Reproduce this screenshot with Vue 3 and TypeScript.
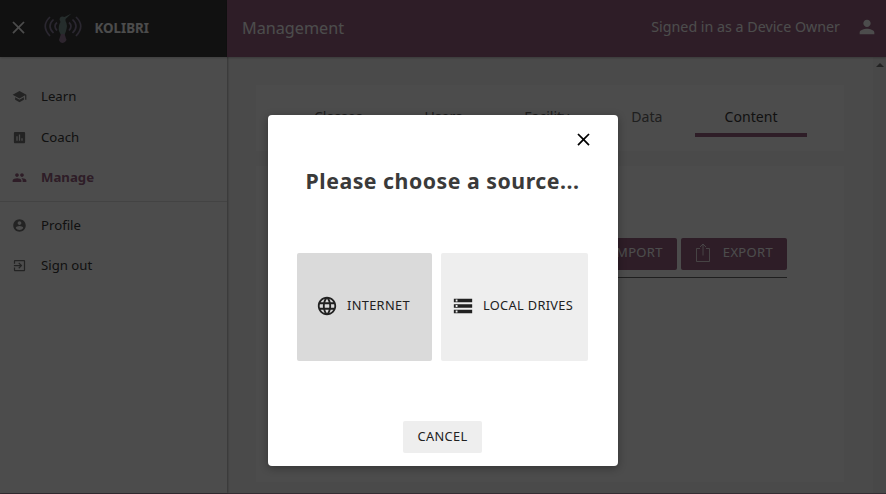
<script setup lang="ts">
interface NavItem {
  label: string
  path: string
  active?: boolean
}

const mainNav: NavItem[] = [
  { label: 'Learn', path: 'M5 13.18v4L12 21l7-3.82v-4L12 17l-7-3.82zM12 3L1 9l11 6 9-4.91V17h2V9L12 3z' },
  { label: 'Coach', path: 'M19 3H5c-1.1 0-2 .9-2 2v14c0 1.1.9 2 2 2h14c1.1 0 2-.9 2-2V5c0-1.1-.9-2-2-2zM9 17H7v-7h2v7zm4 0h-2V7h2v10zm4 0h-2v-4h2v4z' },
  { label: 'Manage', active: true, path: 'M16 11c1.66 0 2.99-1.34 2.99-3S17.66 5 16 5s-3 1.34-3 3 1.34 3 3 3zm-8 0c1.66 0 2.99-1.34 2.99-3S9.66 5 8 5 5 6.34 5 8s1.34 3 3 3zm0 2c-2.33 0-7 1.17-7 3.5V19h14v-2.5c0-2.33-4.67-3.5-7-3.5zm8 0c-.29 0-.62.02-.97.05 1.16.84 1.97 1.97 1.97 3.45V19h6v-2.5c0-2.33-4.67-3.5-7-3.5z' },
]
const userNav: NavItem[] = [
  { label: 'Profile', path: 'M12 2C6.48 2 2 6.48 2 12s4.48 10 10 10 10-4.48 10-10S17.52 2 12 2zm0 3c1.66 0 3 1.34 3 3s-1.34 3-3 3-3-1.34-3-3 1.34-3 3-3zm0 14.2c-2.5 0-4.71-1.28-6-3.22.03-1.99 4-3.08 6-3.08 1.99 0 5.97 1.09 6 3.08-1.29 1.94-3.5 3.22-6 3.22z' },
  { label: 'Sign out', path: 'M10.09 15.59L11.5 17l5-5-5-5-1.41 1.41L12.67 11H3v2h9.67l-2.58 2.59zM19 3H5c-1.11 0-2 .9-2 2v4h2V5h14v14H5v-4H3v4c0 1.1.89 2 2 2h14c1.1 0 2-.9 2-2V5c0-1.1-.9-2-2-2z' },
]
const tabs: string[] = ['Classes', 'Users', 'Facility', 'Data', 'Content']
const closePath = 'M19 6.41L17.59 5 12 10.59 6.41 5 5 6.41 10.59 12 5 17.59 6.41 19 12 13.41 17.59 19 19 17.59 13.41 12z'
</script>

<template>
  <div class="app">
    <aside class="sidebar">
      <div class="brand">
        <svg class="brand-close" viewBox="0 0 24 24"><path :d="closePath" /></svg>
        <svg class="logo" viewBox="0 0 38 32">
          <g class="waves">
            <path d="M6 4Q-3.500 13 6 23M9.500 6.500Q2.500 13 9.500 20M13 9.500Q9 13 13 17.500" />
            <path d="M32 4Q41.500 13 32 23M28.500 6.500Q35.500 13 28.500 20M25 9.500Q29 13 25 17.500" />
          </g>
          <path class="bird" d="M27.500 0.500L20.500 4Q16 2.500 15.500 6.500L16.500 9Q14 13 15 18L17 22H20.500L22 18Q24 12 21.500 8V6Z" />
          <path class="tail" d="M17 21H20.500L22.500 27Q21 30 18.800 30Q16 30 15 27Z" />
        </svg>
        <span class="brand-name">KOLIBRI</span>
      </div>
      <nav class="nav">
        <a v-for="item in mainNav" :key="item.label" class="nav-item" :class="{ active: item.active }">
          <svg viewBox="0 0 24 24"><path :d="item.path" /></svg>{{ item.label }}
        </a>
        <div class="divider"></div>
        <a v-for="item in userNav" :key="item.label" class="nav-item">
          <svg viewBox="0 0 24 24"><path :d="item.path" /></svg>{{ item.label }}
        </a>
      </nav>
    </aside>

    <div class="main">
      <header class="topbar">
        <span class="page-title">Management</span>
        <span class="signed-in">Signed in as a Device Owner</span>
        <svg class="person" viewBox="0 0 24 24"><path d="M12 12c2.210 0 4-1.790 4-4s-1.790-4-4-4-4 1.790-4 4 1.790 4 4 4zm0 2c-2.670 0-8 1.340-8 4v2h16v-2c0-2.660-5.330-4-8-4z" /></svg>
      </header>
      <div class="body">
        <div class="content">
          <div class="card tabs">
            <a v-for="tab in tabs" :key="tab" class="tab" :class="{ selected: tab === 'Content' }">{{ tab }}</a>
          </div>
          <div class="card channels">
            <div class="actions">
              <button class="primary">
                <svg viewBox="0 0 16 20"><path d="M5 6.500H1.500V19H14.500V6.500H11M8 1V13M5 10L8 13L11 10" /></svg>IMPORT
              </button>
              <button class="primary">
                <svg viewBox="0 0 16 20"><path d="M5 5.500H1.500V18.500H14.500V5.500H11M8 12.500V1M5 4L8 1L11 4" /></svg>EXPORT
              </button>
            </div>
          </div>
        </div>
        <div class="scrollbar"><span class="arrow"></span></div>
      </div>
    </div>

    <div class="overlay">
      <section class="modal">
        <svg class="modal-close" viewBox="0 0 24 24"><path :d="closePath" /></svg>
        <h1>Please choose a source...</h1>
        <div class="sources">
          <button class="source internet">
            <svg viewBox="0 0 24 24"><path d="M11.990 2C6.470 2 2 6.480 2 12s4.470 10 9.990 10C17.520 22 22 17.520 22 12S17.520 2 11.990 2zm6.930 6h-2.950c-.32-1.250-.78-2.450-1.380-3.560 1.840.63 3.370 1.910 4.330 3.560zM12 4.040c.83 1.200 1.480 2.530 1.910 3.960h-3.820c.43-1.430 1.080-2.760 1.910-3.960zM4.260 14C4.100 13.360 4 12.690 4 12s.1-1.360.26-2h3.380c-.08.66-.14 1.320-.14 2 0 .68.06 1.340.14 2H4.260zm.82 2h2.950c.32 1.250.78 2.450 1.380 3.560-1.840-.63-3.370-1.900-4.330-3.560zm2.950-8H5.080c.96-1.660 2.490-2.930 4.330-3.560C8.810 5.550 8.350 6.750 8.030 8zM12 19.960c-.83-1.200-1.480-2.530-1.910-3.960h3.820c-.43 1.430-1.080 2.760-1.910 3.960zM14.340 14H9.660c-.09-.66-.16-1.320-.16-2 0-.68.07-1.350.16-2h4.680c.09.65.16 1.320.16 2 0 .68-.07 1.340-.16 2zm.25 5.560c.6-1.110 1.060-2.310 1.380-3.560h2.950c-.96 1.650-2.490 2.930-4.330 3.560zM16.360 14c.08-.66.14-1.320.14-2 0-.68-.06-1.340-.14-2h3.380c.16.64.26 1.310.26 2s-.1 1.360-.26 2h-3.380z" /></svg>INTERNET
          </button>
          <button class="source drives">
            <svg viewBox="0 0 24 24"><path d="M2 20h20v-4H2v4zm2-3h2v2H4v-2zM2 4v4h20V4H2zm4 3H4V5h2v2zm-4 7h20v-4H2v4zm2-3h2v2H4v-2z" /></svg>LOCAL DRIVES
          </button>
        </div>
        <button class="cancel">CANCEL</button>
      </section>
    </div>
  </div>
</template>

<style>
body {
  margin: 0;
  overflow: hidden;
}
</style>

<style scoped>
.app {
  position: relative;
  display: flex;
  width: 886px;
  height: 494px;
  box-sizing: border-box;
  padding-bottom: 1px;
  overflow: hidden;
  background: #b39aab;
  color: #3a3a3a;
  font-family: "Noto Sans", sans-serif;
  font-size: 13.200px;
}
svg {
  flex: none;
  fill: currentColor;
}
button {
  display: flex;
  align-items: center;
  box-sizing: border-box;
  border: 0;
  border-radius: 2px;
  padding: 0;
  color: #212121;
  font: inherit;
  font-size: 12.8px;
  letter-spacing: 0.33px;
  white-space: nowrap;
}
.sidebar {
  z-index: 1;
  width: 227px;
  background: #fff;
  box-shadow: 1px 0 2px rgba(0, 0, 0, 0.3);
}
.brand {
  display: flex;
  align-items: center;
  box-sizing: border-box;
  height: 57px;
  padding: 0 0 3px 8px;
  background: #3a3a3a;
  box-shadow: 0 1px 2px rgba(0, 0, 0, 0.2);
  color: #fff;
}
.brand-close {
  width: 21px;
  height: 21px;
}
.logo {
  width: 38px;
  height: 32px;
  margin: 3px 0 0 15px;
}
.waves {
  fill: none;
  stroke: #8e82a0;
  stroke-width: 1.7;
}
.bird {
  fill: #7d9793;
}
.tail {
  fill: #977c9a;
}
.brand-name {
  margin: 1px 0 0 12.500px;
  font-size: 13.300px;
  font-weight: 700;
}
.nav {
  display: flex;
  flex-direction: column;
  padding-top: 19px;
}
.nav-item {
  display: flex;
  align-items: center;
  gap: 14px;
  height: 40.400px;
  padding-left: 12px;
}
.nav-item svg {
  width: 15px;
  height: 15px;
  margin-top: 1px;
  fill: #757575;
}
.nav-item.active {
  color: #996182;
  font-weight: 700;
}
.nav-item.active svg {
  fill: #996182;
}
.divider {
  height: 1px;
  margin: 4px 0 2.500px;
  background: #e2e2e2;
}
.main {
  display: flex;
  flex: 1;
  flex-direction: column;
}
.topbar {
  z-index: 1;
  display: flex;
  align-items: center;
  box-sizing: border-box;
  height: 57px;
  padding: 0 8px 2px 15px;
  background: #996182;
  box-shadow: 0 1px 2px rgba(0, 0, 0, 0.25);
  color: #fff;
}
.page-title {
  flex: 1;
  font-size: 16.200px;
}
.signed-in {
  margin-top: -2px;
  font-size: 14.250px;
}
.person {
  width: 22px;
  height: 22px;
  margin: -1px 0 0 16px;
}
.body {
  display: flex;
  flex: 1;
  background: #f9f9f9;
}
.content {
  display: flex;
  flex: 1;
  flex-direction: column;
  gap: 15px;
  padding: 28px 29px 11px;
}
.card {
  box-sizing: border-box;
  background: #fff;
}
.tabs {
  display: flex;
  justify-content: flex-end;
  gap: 3px;
  height: 66px;
  padding: 13px 37px 14px 0;
}
.tab {
  box-sizing: border-box;
  height: 39px;
  padding: 9px 29.500px 0;
  border-bottom: 4px solid transparent;
  color: #686868;
  font-size: 14.100px;
  line-height: 20px;
}
.tab.selected {
  border-color: #996182;
  color: #3a3a3a;
}
.channels {
  flex: 1;
  padding: 72px 57px 0;
}
.actions {
  display: flex;
  justify-content: flex-end;
  gap: 4px;
  padding-bottom: 7px;
  border-bottom: 1px solid #686868;
}
.primary {
  height: 32px;
  padding: 0 14px 4px;
  background: #996182;
  color: #fff;
  font-size: 13px;
}
.primary svg {
  width: 16px;
  height: 20px;
  margin: 1px 12px 0 0;
  fill: none;
  stroke: currentColor;
  stroke-width: 0.8;
}
.scrollbar {
  width: 13px;
  padding-top: 6px;
  background: #f1f1f1;
}
.arrow {
  display: block;
  width: 0;
  margin-left: 3px;
  border: 4px solid transparent;
  border-top: 0;
  border-bottom-color: #777;
}
.overlay {
  position: absolute;
  z-index: 2;
  inset: 0;
  display: flex;
  align-items: flex-start;
  justify-content: center;
  padding-top: 115px;
  background: rgba(0, 0, 0, 0.7);
}
.modal {
  display: flex;
  flex-direction: column;
  align-items: center;
  box-sizing: border-box;
  width: 350px;
  height: 351px;
  padding-right: 1px;
  border-radius: 4px;
  background: #fff;
  box-shadow: 0 2px 8px rgba(0, 0, 0, 0.33);
}
.modal-close {
  align-self: flex-end;
  width: 21px;
  height: 21px;
  margin: 14px 23px 0 0;
  fill: #000;
}
h1 {
  margin: 16px 0 0;
  font-size: 21.300px;
  letter-spacing: 0.5px;
  line-height: 30px;
  white-space: nowrap;
}
.sources {
  display: flex;
  gap: 9px;
  margin-top: 57px;
}
.source {
  height: 108px;
  padding-bottom: 4px;
}
.source svg {
  width: 22px;
  height: 22px;
  margin: 1px 9px 0 0;
}
.internet {
  width: 135px;
  padding-left: 19px;
  background: #dadada;
}
.drives {
  width: 147px;
  padding-left: 11px;
  background: #eee;
}
.cancel {
  justify-content: center;
  width: 79px;
  height: 32px;
  margin-top: 60px;
  padding-bottom: 2px;
  background: #eee;
}
</style>
